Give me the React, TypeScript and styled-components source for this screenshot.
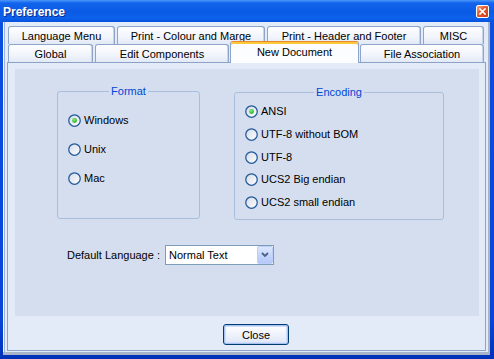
import { useId } from "react";
import styled, { createGlobalStyle } from "styled-components";

const GlobalStyle = createGlobalStyle`
  html, body {
    margin: 0;
    padding: 0;
    background: #ffffff;
  }

  body {
    font-family: "Liberation Sans", Arial, sans-serif;
    font-size: 11px;
    color: #000000;
  }
`;

const Window = styled.div`
  width: 494px;
  height: 359px;
  display: flex;
  flex-direction: column;
  background: linear-gradient(to right, #0a3fd2 0, #1e6cf2 2px, #0b4fe0 3px, #0b4fe0 490px, #0535c4 492px, #0026a8 494px);
  overflow: hidden;
`;

const TitleBar = styled.div`
  height: 22px;
  flex: none;
  display: flex;
  align-items: center;
  justify-content: space-between;
  padding: 1px 5px 0 3px;
  box-sizing: border-box;
  background: linear-gradient(#4a97fa 0, #1364ec 3px, #0a5ae6 12px, #0d61ea 18px, #0652de 22px);
`;

const Title = styled.span`
  color: #ffffff;
  font-weight: bold;
  font-size: 12px;
  text-shadow: 1px 1px 0 #0a2a8a;
`;

const CloseBox = styled.div`
  width: 13px;
  height: 13px;
  box-sizing: border-box;
  border: 1px solid #ffffff;
  border-radius: 2px;
  background: linear-gradient(135deg, #f3a58a 0, #e2582f 45%, #c8401a 100%);
  display: flex;
  align-items: center;
  justify-content: center;
`;

const Body = styled.div`
  flex: 1;
  display: flex;
  padding: 0 4px 4px 3px;
  background: linear-gradient(#0b4fe0, #0846d6 300px, #0032b8);
`;

const Client = styled.div`
  flex: 1;
  box-sizing: border-box;
  padding: 4px 2px 1px 4px;
  background: #e4ebf8;
  border-style: solid;
  border-color: #a9b3c9;
  border-width: 0 2px 3px 0;
  box-shadow: inset 1px 0 0 #f5f8fe, inset 2px 0 0 #9fb2d4;
  display: flex;
  flex-direction: column;
`;

const TabHeader = styled.div`
  height: 36px;
  flex: none;
  display: flex;
  flex-direction: column;
`;

const TabRow = styled.div<{ $gap: number }>`
  height: 18px;
  display: flex;
  align-items: flex-end;
  gap: ${(p) => p.$gap}px;
  padding-left: 1px;
`;

const Tab = styled.div<{ $w: number; $ml: number; $active?: boolean }>`
  position: relative;
  width: ${(p) => p.$w}px;
  margin-left: ${(p) => p.$ml}px;
  height: ${(p) => (p.$active ? 22 : 18)}px;
  margin-bottom: ${(p) => (p.$active ? -1 : 0)}px;
  padding-bottom: ${(p) => (p.$active ? 2 : 0)}px;
  padding-top: ${(p) => (p.$active ? 0 : 1)}px;
  z-index: ${(p) => (p.$active ? 1 : 0)};
  box-sizing: border-box;
  flex: none;
  display: flex;
  align-items: center;
  justify-content: center;
  white-space: nowrap;
  border: 1px solid #8ea5cb;
  border-bottom: none;
  border-top-color: ${(p) => (p.$active ? "#e68b2c" : "#8ea5cb")};
  border-radius: 3px 3px 0 0;
  background: ${(p) =>
    p.$active
      ? "#fcfdfe"
      : "linear-gradient(#fdfeff 0, #f1f4fb 60%, #e2e9f6 100%)"};
  box-shadow: ${(p) =>
    p.$active
      ? "inset 0 2px 0 #ffc83c"
      : "inset -1px 0 0 #c9d4ea"};
`;

const Page = styled.div`
  flex: 1;
  box-sizing: border-box;
  border: 1px solid #8ca2c8;
  background: #e4ebf8;
  display: flex;
  flex-direction: column;
`;

const Panel = styled.div`
  width: 464px;
  height: 247px;
  margin: 6px 0 0 7px;
  box-sizing: border-box;
  padding: 22px 0 0 42px;
  background: #d5deef;
`;

const Groups = styled.div`
  display: flex;
  align-items: flex-start;
  gap: 34px;
`;

const GroupBox = styled.div<{ $w: number; $top: number }>`
  width: ${(p) => p.$w}px;
  height: 128px;
  margin-top: ${(p) => p.$top}px;
  box-sizing: border-box;
  border: 1px solid #a9bedb;
  border-radius: 3px;
  display: flex;
  flex-direction: column;
`;

const GroupTitle = styled.div`
  align-self: center;
  margin-top: -7px;
  padding: 0 2px;
  line-height: 13px;
  color: #0046d5;
  background: #d5deef;
`;

const RadioList = styled.div<{ $gap: number; $top: number }>`
  display: flex;
  flex-direction: column;
  gap: ${(p) => p.$gap}px;
  padding: ${(p) => p.$top}px 0 0 10px;
`;

const RadioRow = styled.label`
  height: 13px;
  display: flex;
  align-items: center;
  gap: 3px;
  line-height: 13px;
  white-space: nowrap;
`;

const LanguageRow = styled.div`
  display: flex;
  align-items: center;
  gap: 8px;
  margin-top: 25px;
  padding-left: 10px;
  height: 20px;
`;

const LanguageLabel = styled.span`
  width: 90px;
  white-space: nowrap;
`;

const Select = styled.div`
  width: 109px;
  height: 20px;
  box-sizing: border-box;
  border: 1px solid #7f9db9;
  background: #ffffff;
  display: flex;
  align-items: center;
  padding-left: 3px;
`;

const SelectValue = styled.span`
  flex: 1;
`;

const DropButton = styled.div`
  width: 16px;
  height: 18px;
  box-sizing: border-box;
  border: 1px solid #bccffa;
  border-radius: 2px;
  background: linear-gradient(#dde7fe, #c1d3fb 60%, #b4c9f7);
  display: flex;
  align-items: center;
  justify-content: center;
`;

const Footer = styled.div`
  padding: 8px 0 0 215px;
`;

const Button = styled.button`
  width: 66px;
  height: 21px;
  box-sizing: border-box;
  padding: 0;
  font-family: inherit;
  font-size: 11px;
  color: #000000;
  border: 1px solid #003c74;
  border-radius: 3px;
  background: linear-gradient(#ffffff 0, #eef2fb 50%, #dfe6f5 100%);
  box-shadow: inset 0 0 0 1px #a9c3f1, inset 0 0 0 2px #cfdefa;
`;

type TabItem = { label: string; w: number; ml?: number; active?: boolean };

const backRow: TabItem[] = [
  { label: "Language Menu", w: 107 },
  { label: "Print - Colour and Marge", w: 148 },
  { label: "Print - Header and Footer", w: 154 },
  { label: "MISC", w: 61 },
];

const frontRow: TabItem[] = [
  { label: "Global", w: 85 },
  { label: "Edit Components", w: 134, ml: 2 },
  { label: "New Document", w: 129, ml: 1, active: true },
  { label: "File Association", w: 124, ml: 1 },
];

const formats = ["Windows", "Unix", "Mac"];
const encodings = ["ANSI", "UTF-8 without BOM", "UTF-8", "UCS2 Big endian", "UCS2 small endian"];

function RadioMark({ checked }: { checked?: boolean }) {
  const id = useId().replace(/[^a-zA-Z0-9]/g, "");
  return (
    <svg width="13" height="13" viewBox="0 0 13 13" style={{ flex: "none" }}>
      <defs>
        <linearGradient id={`f${id}`} x1="0" y1="0" x2="1" y2="1">
          <stop offset="0" stopColor="#d3dae6" />
          <stop offset="1" stopColor="#ffffff" />
        </linearGradient>
        <radialGradient id={`d${id}`} cx="0.4" cy="0.35" r="0.7">
          <stop offset="0" stopColor="#8ff07f" />
          <stop offset="1" stopColor="#13a81a" />
        </radialGradient>
      </defs>
      <circle cx="6.5" cy="6.5" r="5.75" fill={`url(#f${id})`} stroke="#23599a" strokeWidth="1.25" />
      {checked && <circle cx="6.5" cy="6.5" r="2.4" fill={`url(#d${id})`} />}
    </svg>
  );
}

function Radio({ label, checked }: { label: string; checked?: boolean }) {
  return (
    <RadioRow>
      <RadioMark checked={checked} />
      <span>{label}</span>
    </RadioRow>
  );
}

function TabStrip() {
  return (
    <TabHeader>
      <TabRow $gap={2}>
        {backRow.map((t) => (
          <Tab key={t.label} $w={t.w} $ml={0}>
            {t.label}
          </Tab>
        ))}
      </TabRow>
      <TabRow $gap={0}>
        {frontRow.map((t) => (
          <Tab key={t.label} $w={t.w} $ml={t.ml ?? 0} $active={t.active}>
            {t.label}
          </Tab>
        ))}
      </TabRow>
    </TabHeader>
  );
}

export default function App() {
  return (
    <>
      <GlobalStyle />
      <Window>
        <TitleBar>
          <Title>Preference</Title>
          <CloseBox>
            <svg width="7" height="7" viewBox="0 0 7 7">
              <path d="M1 1 L6 6 M6 1 L1 6" stroke="#ffffff" strokeWidth="1.6" strokeLinecap="square" />
            </svg>
          </CloseBox>
        </TitleBar>
        <Body>
          <Client>
            <TabStrip />
            <Page>
              <Panel>
                <Groups>
                  <GroupBox $w={143} $top={0}>
                    <GroupTitle>Format</GroupTitle>
                    <RadioList $gap={16} $top={16}>
                      {formats.map((f, i) => (
                        <Radio key={f} label={f} checked={i === 0} />
                      ))}
                    </RadioList>
                  </GroupBox>
                  <GroupBox $w={210} $top={1}>
                    <GroupTitle>Encoding</GroupTitle>
                    <RadioList $gap={9.75} $top={6}>
                      {encodings.map((e, i) => (
                        <Radio key={e} label={e} checked={i === 0} />
                      ))}
                    </RadioList>
                  </GroupBox>
                </Groups>
                <LanguageRow>
                  <LanguageLabel>Default Language :</LanguageLabel>
                  <Select>
                    <SelectValue>Normal Text</SelectValue>
                    <DropButton>
                      <svg width="8" height="6" viewBox="0 0 8 6">
                        <path d="M1 1 L4 4 L7 1" fill="none" stroke="#4d6185" strokeWidth="1.8" />
                      </svg>
                    </DropButton>
                  </Select>
                </LanguageRow>
              </Panel>
              <Footer>
                <Button>Close</Button>
              </Footer>
            </Page>
          </Client>
        </Body>
      </Window>
    </>
  );
}
